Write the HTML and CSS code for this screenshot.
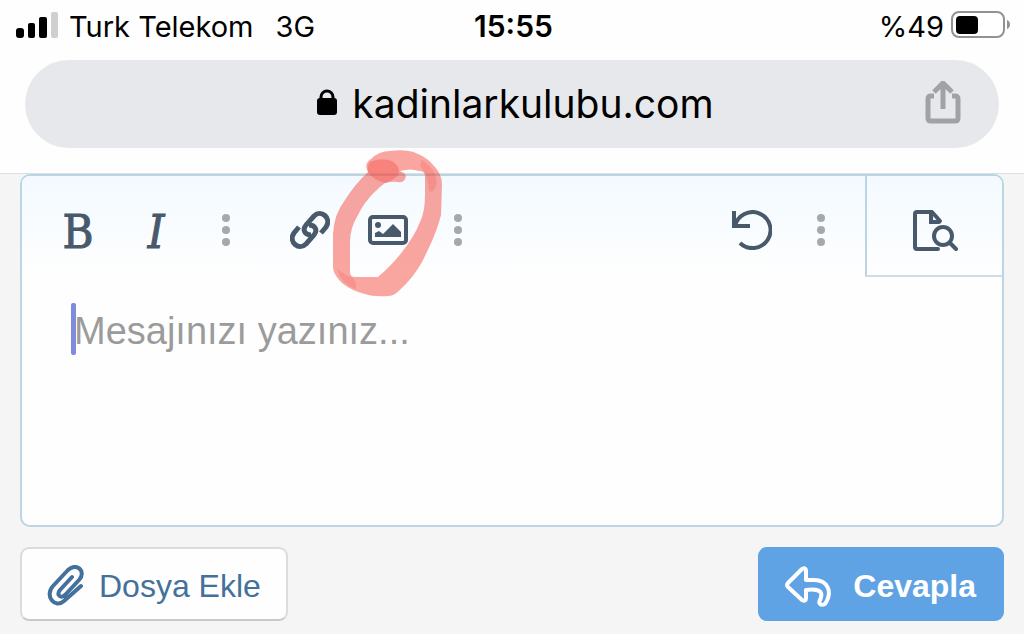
FILE: index.html
```html
<!DOCTYPE html>
<html lang="tr">
<head>
    <meta charset="UTF-8">
    <meta name="viewport" content="width=device-width, initial-scale=1.0">
    <title>kadinlarkulubu.com</title>
    <link rel="stylesheet" href="styles.css">
</head>
<body>

    <header class="browser">
        <div class="status-bar">
            <div class="status-left">
                <svg class="signal" width="44" height="28" viewBox="0 0 44 28" aria-hidden="true">
                    <rect x="1" y="16" width="8" height="10" rx="3"/>
                    <rect x="13" y="11" width="7" height="15" rx="2"/>
                    <rect x="24" y="5" width="8" height="21" rx="2"/>
                    <rect x="36" y="0" width="7" height="26" rx="2" fill="#cfcfcf"/>
                </svg>
                <span class="carrier">Turk Telekom</span>
                <span>3G</span>
            </div>
            <time class="clock">15:55</time>
            <div class="status-right">
                <span>%49</span>
                <svg width="62" height="30" viewBox="0 0 62 30" aria-hidden="true">
                    <rect x="2" y="1" width="52" height="25" rx="7" fill="#fff" stroke="#929292" stroke-width="2"/>
                    <rect x="6" y="5" width="22" height="18" rx="4"/>
                    <path d="M57 9c4 1 4 8 0 9z" fill="#929292"/>
                </svg>
            </div>
        </div>

        <div class="address-bar">
            <div class="address">
                <svg width="22" height="28" viewBox="0 0 22 28" aria-hidden="true">
                    <rect x="1" y="9" width="20" height="17" rx="3"/>
                    <path d="M5 11V8a6 6 0 0 1 12 0v3" fill="none" stroke="#000" stroke-width="3"/>
                </svg>
                <span>kadinlarkulubu.com</span>
            </div>
            <button class="share" type="button" aria-label="Paylaş">
                <svg width="38" height="46" viewBox="0 0 38 46" fill="none" stroke="#a0a3a6" stroke-width="5">
                    <path d="M10 15H7q-3 0-3 3v19q0 3 3 3h24q3 0 3-3V18q0-3-3-3h-3"/>
                    <path d="M19 28V2M10 11l9-9 9 9"/>
                </svg>
            </button>
        </div>
    </header>

    <form class="reply-form">
        <div class="editor">
            <div class="toolbar">
                <div class="tools">
                    <button class="tool letter" type="button" aria-label="Kalın">B</button>
                    <button class="tool letter italic" type="button" aria-label="İtalik">I</button>
                    <button class="tool more" type="button" aria-label="Diğer">
                        <svg width="8" height="32" viewBox="0 0 8 32"><circle cx="4" cy="4" r="4"/><circle cx="4" cy="16" r="4"/><circle cx="4" cy="28" r="4"/></svg>
                    </button>
                    <button class="tool group" type="button" aria-label="Bağlantı ekle">
                        <svg width="40" height="40" viewBox="0 0 40 40" fill="none" stroke="#48596b" stroke-width="5">
                            <path d="M31 23l5-6c6-9-5-18-12-11l-8 9c-4 5-1 10 5 10"/>
                            <path d="M9 17l-5 6c-6 9 5 18 12 11l8-9c4-5 1-10-5-10"/>
                        </svg>
                    </button>
                    <button class="tool" type="button" aria-label="Resim ekle">
                        <svg width="40" height="30" viewBox="0 0 40 30">
                            <rect x="2" y="2" width="36" height="26" rx="3" fill="none" stroke="#48596b" stroke-width="4"/>
                            <circle cx="10" cy="10" r="3" fill="#48596b"/>
                            <path d="M7 22v-4l4-2 4 3L25 9l8 8v5z" fill="#48596b"/>
                        </svg>
                    </button>
                    <button class="tool more" type="button" aria-label="Diğer">
                        <svg width="8" height="32" viewBox="0 0 8 32"><circle cx="4" cy="4" r="4"/><circle cx="4" cy="16" r="4"/><circle cx="4" cy="28" r="4"/></svg>
                    </button>
                </div>
                <div class="tools tools-end">
                    <button class="tool" type="button" aria-label="Geri al">
                        <svg width="42" height="40" viewBox="0 0 42 40" fill="none" stroke="#48596b" stroke-width="4">
                            <path d="M4 1v15h16"/>
                            <path d="M5 16A18 18 0 1 1 10 33"/>
                        </svg>
                    </button>
                    <button class="tool more" type="button" aria-label="Diğer">
                        <svg width="8" height="32" viewBox="0 0 8 32"><circle cx="4" cy="4" r="4"/><circle cx="4" cy="16" r="4"/><circle cx="4" cy="28" r="4"/></svg>
                    </button>
                </div>
                <button class="preview" type="button" aria-label="Önizleme">
                    <svg width="46" height="42" viewBox="0 0 46 42" fill="none" stroke="#48596b" stroke-width="4" stroke-linecap="round" stroke-linejoin="round">
                        <path d="M26 40H5q-2 0-2-2V5q0-2 2-2h15l8 9"/>
                        <path d="M19 4v9h8" stroke-linejoin="miter"/>
                        <circle cx="31" cy="27" r="9"/>
                        <path d="M38 34l6 6"/>
                    </svg>
                </button>
            </div>
            <div class="message">
                <textarea aria-label="Mesaj" placeholder="Mesajınızı yazınız..."></textarea>
                <span class="caret"></span>
            </div>
            <!-- hand-drawn marker around the image button -->
            <svg class="marker" width="120" height="160" viewBox="0 0 120 160" fill="#f5443a" aria-hidden="true">
                <path fill-rule="evenodd" fill-opacity=".48" d="M40 26C37 20 38 16 43 13Q51 5 62 5Q78 3 88 7Q100 12 106 20Q114 28 114 39L113 69C109 85 103 98 94 116C86 130 77 140 67 148Q64 150 60 150Q46 151 37 148Q24 145 14 137Q5 128 5 121V88Q6 68 17 54Q27 38 40 26ZM57 37C44 47 35 58 30 69Q22 82 22 96V126Q22 131 27 131H50Q65 118 74 106Q86 91 92 76Q97 66 97 49V30Q97 25 91 25Q82 22 72 25Q80 28 77 33Q75 37 70 36Q64 35 57 37Z"/>
                <path fill-opacity=".35" d="M42 16Q52 11 64 15Q72 20 71 28Q65 35 57 37Q45 34 40 26Q39 20 42 16Z"/>
                <path fill-opacity=".2" d="M94 14Q108 23 109 37Q106 48 101 45Q100 28 92 20ZM9 123Q20 131 25 132Q30 139 27 143Q13 137 9 123Z"/>
            </svg>
        </div>

        <div class="actions">
            <button class="btn btn-attach" type="button">
                <svg width="38" height="42" viewBox="0 0 38 42" fill="none" stroke="#44709c" stroke-width="4" stroke-linecap="round" stroke-linejoin="round">
                    <path d="M25 12L13 25c-4 5 1 9 5 5l14-15c8-9-3-18-11-10L6 21C-3 31 8 44 17 36l17-15"/>
                </svg>
                <span>Dosya Ekle</span>
            </button>
            <button class="btn btn-reply" type="submit">
                <svg width="46" height="42" viewBox="0 0 46 42" fill="none" stroke="#fff" stroke-width="4" stroke-linecap="round" stroke-linejoin="round">
                    <path d="M17 4L3 18q-2 2 0 4l14 13q4 2 4-2v-8c8-1 14 0 15 3q1 3-1 7c-2 4 1 6 5 4 8-12 3-24-11-24h-8V6q0-4-4-2z"/>
                </svg>
                <span>Cevapla</span>
            </button>
        </div>
    </form>

</body>
</html>
```
FILE: styles.css
```css
* {
    box-sizing: border-box;
}
body {
    margin: 0;
    min-height: 100vh;
    background: #f5f5f5;
    font-family: "Liberation Sans", Arial, sans-serif;
}
button {
    display: flex;
    align-items: center;
    justify-content: center;
    padding: 0;
    border: none;
    background: none;
    font-family: inherit;
    cursor: pointer;
}
svg {
    flex-shrink: 0;
}

/* browser chrome */
.browser {
    background: #fefefe;
    border-bottom: 1px solid #dcdfe1;
    padding-bottom: 25px;
    font-family: Inter, sans-serif;
    color: #000;
}
.status-bar {
    display: grid;
    grid-template-columns: 1fr auto 1fr;
    align-items: center;
    height: 52px;
    padding: 0 12px 0 15px;
    font-size: 29px;
}
.status-left,
.status-right {
    display: flex;
    align-items: center;
}
.status-left {
    gap: 10px;
}
.carrier {
    margin-right: 12px;
}
.status-right {
    justify-content: flex-end;
    gap: 6px;
}
.clock {
    font-size: 30px;
    font-weight: 600;
}
.address-bar {
    display: grid;
    grid-template-columns: 1fr auto 1fr;
    align-items: center;
    height: 88px;
    margin: 8px 25px 0;
    padding: 0 37px;
    border-radius: 44px;
    background: #e7e8eb;
}
.address {
    grid-column: 2;
    display: flex;
    align-items: center;
    gap: 14px;
    padding: 0 0 2px 6px;
    font-size: 39px;
}
.share {
    justify-self: end;
}

/* editor */
.reply-form {
    padding: 0 20px;
}
.editor {
    position: relative;
    border: 2px solid #bcd5e3;
    border-radius: 10px;
    background: #fefefe;
}
.toolbar {
    display: flex;
    height: 101px;
    border-radius: 8px 8px 0 0;
    background: linear-gradient(#f3faff, #fefefe);
}
.tools {
    display: flex;
    padding: 8px 0 0 17px;
}
.tools-end {
    margin-left: auto;
    padding: 8px 13px 0 0;
}
.tool {
    width: 78px;
    height: 92px;
    color: #48596b;
}
.letter {
    padding-top: 2px;
    font-family: "DejaVu Serif Condensed", "DejaVu Serif", serif;
    font-size: 47px;
    -webkit-text-stroke: 1px #48596b;
}
.italic {
    font-style: italic;
}
.more {
    width: 62px;
}
.more svg {
    fill: #a3a9ae;
}
.group {
    margin-left: 14px;
}
.preview {
    width: 137px;
    padding-top: 8px;
    border-left: 2px solid #bcd5e3;
    border-bottom: 2px solid #ccdde7;
}
.message {
    position: relative;
}
textarea {
    display: block;
    width: 100%;
    height: 248px;
    padding: 32px 52px;
    border: none;
    outline: none;
    resize: none;
    background: none;
    font-family: inherit;
    font-size: 38px;
    line-height: 44px;
}
textarea::placeholder {
    color: #9b9b9b;
    opacity: 1;
}
.caret {
    position: absolute;
    left: 49px;
    top: 26px;
    width: 5px;
    height: 52px;
    border-radius: 2px;
    background: #7f8bdc;
}
.marker {
    position: absolute;
    left: 306px;
    top: -30px;
    pointer-events: none;
}

/* buttons under the editor */
.actions {
    display: flex;
    justify-content: space-between;
    padding: 20px 0 12px;
}
.btn {
    height: 74px;
    border-radius: 9px;
    font-size: 32px;
}
.btn-attach {
    gap: 14px;
    padding: 4px 25px 0;
    border: 2px solid #dcdcdc;
    border-bottom-color: #c8c8c8;
    background: #fefefe;
    color: #44709c;
}
.btn-reply {
    gap: 22px;
    padding: 4px 28px 0 27px;
    background: #60a3e4;
    color: #fff;
    font-weight: bold;
}
```
